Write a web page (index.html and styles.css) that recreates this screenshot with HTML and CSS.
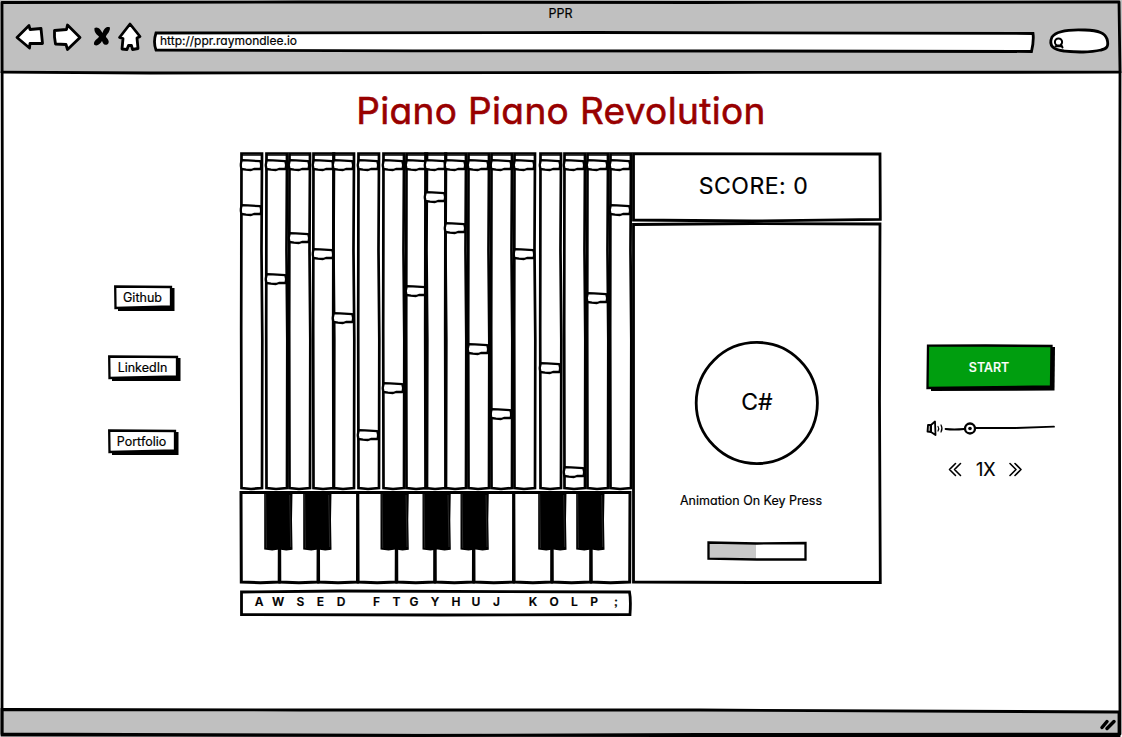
FILE: index.html
```
<!DOCTYPE html>
<html lang="en">
<head>
<meta charset="utf-8">
<title>PPR</title>
<link rel="stylesheet" href="styles.css">
</head>
<body>
<div class="window">
  <header class="chrome">
    <div class="chrome-title">PPR</div>
    <div class="toolbar">
      <svg class="nav-icons" width="140" height="40" viewBox="0 0 140 40">
        <g class="ink paper">
          <path d="M2 17.500 14 5.500 15 9.500 26 8.500 27.500 23.500 15 23.500 14.500 28Z"/>
          <path d="M39.500 10.500 51.500 9.500 52.500 5 65 17.500 52.500 29.500 51 24.500 40.500 24 39.500 17Z"/>
          <path d="M115 4 125 16.500 122 18 123 28.500 117.500 29.500 116.500 25.500 113.500 25.500 112 29.500 107 29 108 18.500 104.500 17.500Z"/>
        </g>
        <path d="M79.500 8C83 6 86 10 87.500 13 89 9 91 6 95 7.500 95 13 90.500 15 91 17 92.500 19 95 21 93 24 89 26.500 88 23 87 21 85 24 82 27 79 24.500 78.500 20 83 19 84 16.500 81 14 79 12 79.500 8Z"/>
      </svg>
      <div class="address">
        <svg class="sketch ink paper" viewBox="0 0 882 22"><path d="M3 2 440 1.500 880 2.500Q881 10 878.500 20.500L600 20 260 19.800 3 19Q0 11 3 2Z"/></svg>
        <span>http://ppr.raymondlee.io</span>
      </div>
      <svg class="search" width="62" height="27" viewBox="0 0 62 27">
        <path class="ink paper" d="M3 9C8 2 25 1.500 36 2 50 2.500 56 5 58 11 60 18 58 21 52 22 40 25 28 24 15 23 5 22-1 18 3 9Z"/>
        <circle class="lens" cx="9.500" cy="14" r="3.600"/><path class="lens" d="M6.500 18.300H12M12 16.500 13.500 19.500"/>
      </svg>
    </div>
  </header>

  <main class="page">
    <h1>Piano Piano Revolution</h1>
    <div class="columns">
      <nav class="links">
        <a class="btn github"><svg class="sketch" viewBox="0 0 62 27"><path d="M4 4 60.500 3 60.500 26 4 26Z"/><path class="ink paper thin" d="M1.200 1.500 57 2 57 21.500 1.500 23Z"/></svg><span>Github</span></a>
        <a class="btn linkedin"><svg class="sketch" viewBox="0 0 74 27"><path d="M4 4 72.500 3 72.500 26 4 26Z"/><path class="ink paper thin" d="M1.200 1.500 69 2 69 21.500 1.500 23Z"/></svg><span>LinkedIn</span></a>
        <a class="btn portfolio"><svg class="sketch" viewBox="0 0 72 27"><path d="M4 4 70.500 3 70.500 26 4 26Z"/><path class="ink paper thin" d="M1.200 1.500 67 2 67 21.500 1.500 23Z"/></svg><span>Portfolio</span></a>
      </nav>

      <section class="game">
        <div class="board">
          <div class="lanes" id="lanes"></div>
          <svg class="keyboard" id="keyboard" width="393" height="95" viewBox="240 490 393 95"></svg>
          <div class="letters">
            <svg class="sketch ink paper" viewBox="0 0 393 28"><path d="M1.500 3 100 2 389.500 3Q391 10 390 25.500L200 26 1.500 25.500Z"/></svg>
            <div class="letter-row" id="letters"></div>
          </div>
        </div>
        <div class="side">
          <div class="score">
            <svg class="sketch ink paper" viewBox="0 0 250 70"><path d="M1.500 1.700 248 2 248.300 67.300 120 69 1.500 68Z"/></svg>
            <span>SCORE: 0</span>
          </div>
          <div class="stage">
            <svg class="sketch ink paper" viewBox="0 0 250 363"><path d="M1.500 2.500 120 1.500 248 2 247.500 180 248.300 360.500 120 360.500 1.500 360Z"/></svg>
            <div class="note-name">
              <svg class="sketch ink paper" viewBox="0 0 124 124"><circle cx="61.800" cy="62" r="60.600"/></svg>
              <span>C#</span>
            </div>
            <p class="caption">Animation On Key Press</p>
            <svg class="progress" width="100" height="20" viewBox="0 0 100 20">
              <path class="paper" d="M1 2H98V18H1Z"/><path class="fill" d="M2 3H49V18H2Z"/>
              <path class="ink thin" d="M1.500 1.500 50 2.500 98.500 2 98.500 18.500 50 18.500 1.500 17.700Z"/>
            </svg>
          </div>
        </div>
      </section>

      <aside class="controls">
        <a class="btn start"><svg class="sketch" viewBox="0 0 130 48"><path d="M5 5 129 3 128.500 46.500 5 47Z"/><path class="ink green thin" d="M2 1.700 60 1.500 125.500 2 125 42.500 1.500 44Z"/></svg><span>START</span></a>
        <svg class="volume" width="130" height="20" viewBox="0 0 130 20">
          <path class="line speaker" d="M2 7 5 7 5 14 1.500 13.500Z"/><path class="line" d="M5 7 9 3.500 9.500 17 5 14Z"/>
          <path class="line fine" d="M12 8.500Q13.500 10.500 12 13M15 7Q17 10.500 15 14"/>
          <path class="line" d="M19.500 11Q28 12 38 11L48 10 90 10 128 8.700"/>
          <circle class="knob" cx="44" cy="10.500" r="5"/><circle cx="44" cy="10.500" r="1.800"/>
        </svg>
        <div class="speed">
          <svg width="15" height="15" viewBox="0 0 15 15"><path class="line arrow" d="M7.500 1.500 1.500 7.500 7.500 13.500M12.500 1.500 6.500 7.500 12.500 13.500"/></svg>
          <span>1X</span>
          <svg width="15" height="15" viewBox="0 0 15 15"><path class="line arrow" d="M1 1.500 7 7.500 1 13.500M6 1.500 12 7.500 6 13.500"/></svg>
        </div>
      </aside>
    </div>
  </main>

  <footer class="status">
    <svg width="1122" height="29" viewBox="0 0 1122 29">
      <path class="bar" d="M2 0.500 300 1 700 1 1119 3 1119 27 2 26Z"/>
      <path class="ink heavy" d="M1102 18.500 1107 12.500M1107 19.500 1114 12.500"/>
    </svg>
  </footer>
  <svg class="frame" viewBox="0 0 1122 737">
    <path class="ink" d="M2 2.500 300 2 700 2.500 1119 2 1120 72 1119.500 400 1120 734 700 734.500 420 735.500 2 734 2.500 300Z"/>
    <path class="ink" d="M2 72.200 150 73 700 72.500 1120 72.200"/>
  </svg>
</div>
<script src="board.js"></script>
</body>
</html>
```

FILE: board.js
```
const lanes = [
  [240, 210], [264.5, 279], [288, 238], [312, 254], [332.3, 318], [357, 435],
  [381.5, 388], [404.5, 291], [424.3, 197], [444, 228], [467.3, 349], [489.8, 414],
  [513.3, 254], [538.5, 368], [562.5, 472], [586.3, 298], [609.3, 210]
];

function note(x, y) {
  return `<path class="line note" d="M${x + 1.8} ${y - 4.8} ${x + 8} ${y - 4.6} ${x + 20.3} ${y - 3.8}Q${x + 21.8} ${y} ${x + 20.6} ${y + 4}L${x + 14} ${y + 4} ${x + 11} ${y + 5} ${x + 6} ${y + 4.600} ${x + 1.5} ${y + 4}Q${x} ${y} ${x + 1.8} ${y - 4.8}Z"/>`;
}

let edge = 240;
document.getElementById("lanes").innerHTML = lanes.map(([x, y]) => {
  const gap = x - edge;
  edge = x + 23;
  return `<svg class="lane" style="margin-left:${gap}px" width="23" height="338" viewBox="0 152 23 338">
    <path class="ink lane-line" d="M1.500 153.500 22 153.500 21.500 250 22.300 340 22 488 11 489 1.500 488 1.200 330Z"/>
    <path class="line fine" d="M2 155.200H21"/>${note(0, 165)}${note(0, y)}</svg>`;
}).join("");

const whites = [241, 279.5, 318.3, 357.8, 396.5, 435, 473.7, 513.8, 552, 591];
const blacks = [264.2, 303.2, 380.5, 422.5, 460.5, 538.2, 576.2];
document.getElementById("keyboard").innerHTML =
  whites.map((x, i) => {
    const r = whites[i + 1] || 630;
    return `<path class="ink paper key" d="M${x} 492.500H${r}L${r - 0.3} 582 ${(x + r) / 2} 582.800 ${x + 0.3} 582Z"/>`;
  }).join("") +
  blacks.map(x => `<path d="M${x} 491.500H${x + 28.3}L${x + 27.8} 520 ${x + 28.3} 549.800 ${x + 22} 550.500 ${x + 15} 549.500 ${x + 8} 550.500 ${x} 549.500Z"/><path class="sheen" d="M${x + 1.5} 494 ${x + 2.2} 548M${x + 25.5} 495 ${x + 26.5} 547"/>`).join("");

const keys = [["A", 259], ["W", 278], ["S", 300.5], ["E", 320.5], ["D", 341], ["F", 376.5], ["T", 396.5],
  ["G", 414], ["Y", 435], ["H", 456], ["U", 476], ["J", 496.500], ["K", 533], ["O", 554], ["L", 574.5], ["P", 594], [";", 616]];
let end = 240;
document.getElementById("letters").innerHTML = keys.map(([k, x]) => {
  const gap = x - 8 - end;
  end = x + 8;
  return `<span style="margin-left:${gap}px">${k}</span>`;
}).join("");
```

FILE: styles.css
```
* { box-sizing: border-box; }
body {
  margin: 0;
  background: #fff;
  color: #000;
  font-family: Inter, Lato, sans-serif;
  font-feature-settings: "cv11" 1, "ss03" 1;
  font-size: 12.5px;
  -webkit-text-stroke: 0.2px currentColor;
}
.window { position: relative; width: 1122px; height: 737px; display: flex; flex-direction: column; overflow: hidden; }
svg { display: block; overflow: visible; flex: none; }
.ink { fill: none; stroke: #000; stroke-width: 2.8; stroke-linejoin: round; stroke-linecap: round; }
.thin { stroke-width: 2.3; stroke-linejoin: miter; }
.paper { fill: #fff; }
.green { fill: #009e0f; }
.line { fill: none; stroke: #000; stroke-width: 1.8; stroke-linejoin: round; stroke-linecap: round; }
.speaker { fill: #aaa; }
.fine { stroke-width: 1.2; }
.arrow { stroke-width: 1.6; }
.knob { fill: #fff; stroke: #000; stroke-width: 2.3; }
.lens { fill: #fff; stroke: #000; stroke-width: 2; stroke-linecap: round; }
.heavy { stroke-width: 3.5; }
.sketch { position: absolute; inset: 0; width: 100%; height: 100%; stroke-linejoin: miter; }
.sketch + span { position: relative; }
.frame { position: absolute; inset: 0; width: 1122px; height: 737px; pointer-events: none; }

.chrome { height: 73px; background: #c0c0c0; }
.chrome-title { height: 25px; line-height: 27px; text-align: center; font-size: 12.5px; padding-right: 1px; }
.toolbar { display: flex; }
.nav-icons { margin-left: 15px; margin-top: -5px; }
.address { position: relative; width: 882px; height: 22px; margin: 6px 0 0 -2px; padding-left: 7px; line-height: 20px; font-size: 12px; white-space: nowrap; }
.search { margin: 3px 0 0 14px; }

.page { flex: 1; }
h1 { margin: 0; height: 79px; line-height: 76px; text-align: center; font-size: 37px; font-weight: 400; letter-spacing: .35px; color: #980000; white-space: nowrap; -webkit-text-stroke: 0.6px #980000; }
.columns { display: grid; grid-template-columns: 240px 643px 1fr; }
.links { display: flex; flex-direction: column; padding-top: 133px; }
.btn { position: relative; display: flex; align-items: center; justify-content: center; padding: 0 5px 3px 0; }
.github { width: 62px; height: 27px; margin-left: 114px; }
.linkedin { width: 74px; height: 27px; margin: 43px 0 0 108px; }
.portfolio { width: 72px; height: 27px; margin: 47px 0 0 108px; }

.game { display: flex; }
.board { width: 392px; }
.lanes { display: flex; height: 338px; }
.lane-line { stroke-width: 2.7; stroke-linejoin: miter; }
.key { stroke-linejoin: miter; stroke-width: 3; }
.note { fill: #fff; stroke-width: 2.3; }
.sheen { fill: none; stroke: #3a3a3a; stroke-width: .7; }
.letters { position: relative; width: 393px; height: 28px; margin-top: 4px; }
.letter-row { position: relative; display: flex; line-height: 26px; font-weight: 600; font-size: 12px; }
.letter-row span { width: 16px; text-align: center; }

.side { width: 250px; }
.score { position: relative; height: 70px; line-height: 69px; text-align: center; font-size: 23px; letter-spacing: .5px; }
.stage { position: relative; height: 363px; display: flex; flex-direction: column; padding-top: 119px; }
.note-name { position: relative; width: 124px; height: 124px; margin-left: 63px; line-height: 123px; text-align: center; font-size: 23px; }
.score span { left: -3.5px; }
.caption { position: relative; margin: 24px 0 0 48px; height: 24px; line-height: 24px; font-size: 12.5px; white-space: nowrap; }
.progress { position: relative; margin: 28px 0 0 75px; }
.fill { fill: #c8c8c8; }

.controls { padding-top: 192px; padding-left: 43px; }
.start { width: 130px; height: 48px; padding: 0 4px 2px 0; color: #fff; font-size: 12.5px; font-weight: 500; }
.volume { margin-top: 26px; }
.speed { display: flex; align-items: center; gap: 13px; margin: 20px 0 0 22px; line-height: 24px; font-size: 18px; }
.speed span { margin-bottom: -1px; }
.status { height: 28px; }
.bar { fill: #c0c0c0; stroke: #000; stroke-width: 2.8; }
```
